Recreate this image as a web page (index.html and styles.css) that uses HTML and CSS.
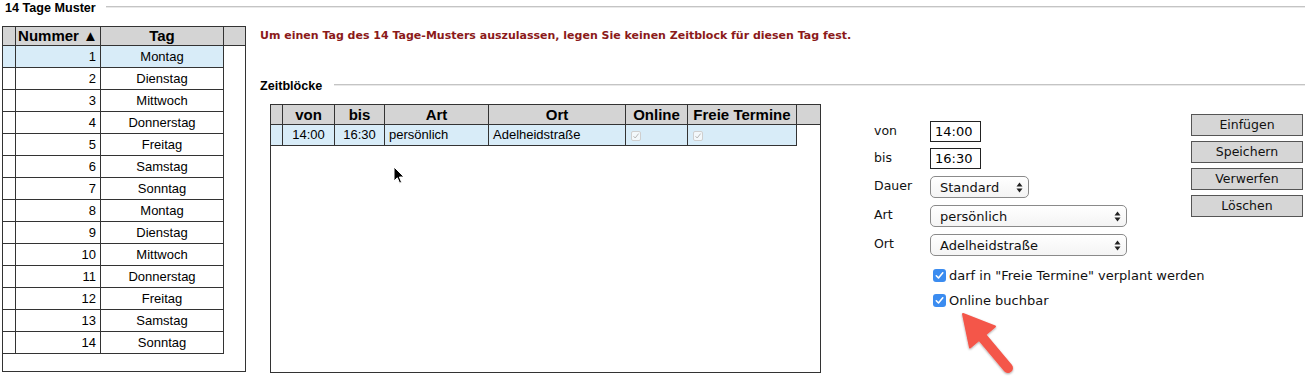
FILE: index.html
```html
<!DOCTYPE html>
<html lang="de">
<head>
<meta charset="utf-8">
<title>14 Tage Muster</title>
<link rel="stylesheet" href="styles.css">
</head>
<body>
<div class="page">
  <div class="legend">
    <span class="legend-text">14 Tage Muster</span>
    <span class="legend-line"></span>
  </div>
  <div class="main">
    <div class="days-box">
      <div class="grid days">
        <div class="h"></div><div class="h">Nummer ▲</div><div class="h">Tag</div><div class="h end"></div>
        <div class="c sel"></div><div class="c num sel">1</div><div class="c mid sel">Montag</div><div class="e"></div>
        <div class="c"></div><div class="c num">2</div><div class="c mid">Dienstag</div><div class="e"></div>
        <div class="c"></div><div class="c num">3</div><div class="c mid">Mittwoch</div><div class="e"></div>
        <div class="c"></div><div class="c num">4</div><div class="c mid">Donnerstag</div><div class="e"></div>
        <div class="c"></div><div class="c num">5</div><div class="c mid">Freitag</div><div class="e"></div>
        <div class="c"></div><div class="c num">6</div><div class="c mid">Samstag</div><div class="e"></div>
        <div class="c"></div><div class="c num">7</div><div class="c mid">Sonntag</div><div class="e"></div>
        <div class="c"></div><div class="c num">8</div><div class="c mid">Montag</div><div class="e"></div>
        <div class="c"></div><div class="c num">9</div><div class="c mid">Dienstag</div><div class="e"></div>
        <div class="c"></div><div class="c num">10</div><div class="c mid">Mittwoch</div><div class="e"></div>
        <div class="c"></div><div class="c num">11</div><div class="c mid">Donnerstag</div><div class="e"></div>
        <div class="c"></div><div class="c num">12</div><div class="c mid">Freitag</div><div class="e"></div>
        <div class="c"></div><div class="c num">13</div><div class="c mid">Samstag</div><div class="e"></div>
        <div class="c"></div><div class="c num">14</div><div class="c mid">Sonntag</div><div class="e"></div>
      </div>
    </div>

    <div class="right">
      <p class="hint">Um einen Tag des 14 Tage-Musters auszulassen, legen Sie keinen Zeitblock für diesen Tag fest.</p>
      <div class="legend sub">
        <span class="legend-text">Zeitblöcke</span>
        <span class="legend-line"></span>
      </div>
      <div class="content">
        <div class="blocks-box">
          <div class="grid blocks">
            <div class="h"></div><div class="h">von</div><div class="h">bis</div><div class="h">Art</div><div class="h">Ort</div><div class="h">Online</div><div class="h">Freie Termine</div><div class="h end"></div>
            <div class="c sel"></div><div class="c mid sel">14:00</div><div class="c mid sel">16:30</div><div class="c left sel">persönlich</div><div class="c left sel">Adelheidstraße</div>
            <div class="c left sel"><span class="mini-check"><svg width="8" height="8" viewBox="0 0 8 8"><path d="M1.5 4.2 L3.2 6 L6.6 1.6" fill="none" stroke="#b8b8b8" stroke-width="1"/></svg></span></div>
            <div class="c left sel"><span class="mini-check"><svg width="8" height="8" viewBox="0 0 8 8"><path d="M1.5 4.2 L3.2 6 L6.6 1.6" fill="none" stroke="#b8b8b8" stroke-width="1"/></svg></span></div>
            <div class="e"></div>
          </div>
        </div>

        <div class="form">
          <div class="frow">
            <span class="flabel">von</span>
            <span class="tinput">14:00</span>
          </div>
          <div class="frow r2">
            <span class="flabel">bis</span>
            <span class="tinput">16:30</span>
          </div>
          <div class="frow r3">
            <span class="flabel">Dauer</span>
            <span class="select short"><span>Standard</span><svg class="updown" width="7" height="11" viewBox="0 0 7 11"><path d="M3.5 0.5 L6.5 4.5 L0.5 4.5 Z M3.5 10.5 L6.5 6.5 L0.5 6.5 Z" fill="#222"/></svg></span>
          </div>
          <div class="frow r3">
            <span class="flabel">Art</span>
            <span class="select long"><span>persönlich</span><svg class="updown" width="7" height="11" viewBox="0 0 7 11"><path d="M3.5 0.5 L6.5 4.5 L0.5 4.5 Z M3.5 10.5 L6.5 6.5 L0.5 6.5 Z" fill="#222"/></svg></span>
          </div>
          <div class="frow r3">
            <span class="flabel">Ort</span>
            <span class="select long"><span>Adelheidstraße</span><svg class="updown" width="7" height="11" viewBox="0 0 7 11"><path d="M3.5 0.5 L6.5 4.5 L0.5 4.5 Z M3.5 10.5 L6.5 6.5 L0.5 6.5 Z" fill="#222"/></svg></span>
          </div>
          <div class="crow first">
            <span class="cbox"><svg width="13" height="13" viewBox="0 0 13 13"><path d="M3.3 6.8 L5.5 9 L9.8 3.8" fill="none" stroke="#fff" stroke-width="1.6" stroke-linecap="round" stroke-linejoin="round"/></svg></span>
            <span class="ctext">darf in "Freie Termine" verplant werden</span>
          </div>
          <div class="crow second">
            <span class="cbox"><svg width="13" height="13" viewBox="0 0 13 13"><path d="M3.3 6.8 L5.5 9 L9.8 3.8" fill="none" stroke="#fff" stroke-width="1.6" stroke-linecap="round" stroke-linejoin="round"/></svg></span>
            <span class="ctext">Online buchbar</span>
          </div>
        </div>

        <div class="buttons">
          <span class="btn">Einfügen</span>
          <span class="btn">Speichern</span>
          <span class="btn">Verwerfen</span>
          <span class="btn">Löschen</span>
        </div>
      </div>
    </div>
  </div>

  <svg class="cursor" width="14" height="20" viewBox="0 0 14 20">
    <path d="M1 1 L1 15 L4.3 11.8 L6.6 17.2 L8.6 16.3 L6.4 11 L11 11 Z" fill="#000" stroke="#fff" stroke-width="1"/>
  </svg>

  <svg class="annot-arrow" width="80" height="80" viewBox="950 305 80 80">
    <defs>
      <filter id="sh" x="-30%" y="-30%" width="160%" height="160%">
        <feDropShadow dx="0" dy="1" stdDeviation="1.3" flood-color="#000" flood-opacity="0.35"/>
      </filter>
    </defs>
    <g filter="url(#sh)" fill="#f4564a" stroke="#f4564a">
      <line x1="982" y1="337" x2="1008" y2="368" stroke-width="10" stroke-linecap="round"/>
      <polygon points="963,314 995,326.5 970,347.5" stroke-width="2" stroke-linejoin="round"/>
    </g>
  </svg>
</div>
</body>
</html>
```

FILE: styles.css
```css
* { box-sizing: border-box; }

html, body {
  margin: 0;
  padding: 0;
  background: #fff;
}

body {
  font-family: "Liberation Sans", Arial, sans-serif;
  color: #000;
}

.page {
  position: relative;
  width: 1305px;
  height: 386px;
  overflow: hidden;
}

/* section titles with rule */
.legend {
  display: flex;
  align-items: center;
  height: 16px;
  padding-left: 5px;
}
.legend-text {
  font-family: "Liberation Sans", Arial, sans-serif;
  font-weight: bold;
  font-size: 12.6px;
  line-height: 16px;
  white-space: nowrap;
}
.legend-line {
  flex: 1;
  height: 2px;
  margin-left: 10px;
  margin-top: -2px;
  border-top: 1px solid #c4c4c4;
  border-bottom: 1px solid #e9e9e9;
}
.legend.sub {
  padding-left: 0;
  margin-top: 35px;
}
.legend.sub .legend-line {
  margin-left: 12px;
}

.main {
  display: flex;
  margin-top: 10px;
  padding-left: 2px;
}

/* generic grid table */
.grid {
  display: grid;
  font-size: 13px;
}
.grid .h {
  background: #d4d4d4;
  border-right: 1px solid #333;
  border-bottom: 1px solid #333;
  font-weight: bold;
  font-size: 15px;
  text-align: center;
  white-space: nowrap;
  overflow: hidden;
}
.grid .h.end { border-right: none; }
.grid .c {
  border-right: 1px solid #333;
  border-bottom: 1px solid #333;
  white-space: nowrap;
  overflow: hidden;
}
.grid .e { background: #fff; }
.grid .sel { background: #d8ecf8; }
.grid .num { text-align: right; padding-right: 4px; }
.grid .mid { text-align: center; }
.grid .left { text-align: left; padding-left: 3px; }

/* left: days */
.days-box {
  width: 244px;
  height: 346px;
  border: 1px solid #333;
  flex: none;
}
.days {
  grid-template-columns: 13px 85px 123px 1fr;
  grid-template-rows: 19px;
  grid-auto-rows: 22px;
}
.days .h { line-height: 18px; }
.days .c { line-height: 21px; }

/* right area */
.right {
  margin-left: 14px;
  flex: 1;
}
.hint {
  margin: 3px 0 0 0;
  font-family: "DejaVu Sans", Verdana, sans-serif;
  font-weight: bold;
  font-size: 11px;
  line-height: 14px;
  color: #8b1a1a;
  white-space: nowrap;
}

.content {
  display: flex;
  align-items: flex-start;
  margin-top: 10px;
}

.blocks-box {
  margin-left: 10px;
  width: 551px;
  height: 269px;
  border: 1px solid #333;
  flex: none;
}
.blocks {
  grid-template-columns: 12px 52px 50px 104px 137px 62px 109px 1fr;
  grid-template-rows: 20px 21px;
}
.blocks .h { line-height: 19px; }
.blocks .c { line-height: 20px; }
.blocks .c.left { padding-left: 4px; }

.mini-check {
  display: inline-flex;
  align-items: center;
  justify-content: center;
  width: 10px;
  height: 10px;
  margin-left: 1px;
  border: 1px solid #cfcfcf;
  border-radius: 2px;
  background: #f3f8fb;
  vertical-align: -1px;
}

/* form */
.form {
  width: 317px;
  margin-left: 53px;
  margin-top: 17px;
  flex: none;
  font-family: "DejaVu Sans", Verdana, sans-serif;
  font-size: 12.5px;
}
.frow {
  display: flex;
  align-items: flex-start;
}
.frow.r2 { margin-top: 6px; }
.frow.r3 { margin-top: 7px; }
.flabel {
  width: 56px;
  margin-top: 2px;
  line-height: 16px;
  color: #111;
}
.tinput {
  display: block;
  width: 51px;
  height: 21px;
  border: 1px solid #222;
  padding-left: 4px;
  font-size: 13px;
  line-height: 19px;
  background: #fff;
}
.select {
  display: flex;
  align-items: center;
  justify-content: space-between;
  height: 22px;
  border: 1px solid #8a8a8a;
  border-radius: 5px;
  padding: 0 5px 0 9px;
  background: linear-gradient(#ffffff, #f4f4f4);
  font-size: 13px;
  color: #111;
}
.select.short { width: 99px; }
.select.long { width: 197px; }
.updown { flex: none; }

.crow {
  display: flex;
  align-items: center;
  height: 13px;
  padding-left: 59px;
  white-space: nowrap;
}
.crow.first { margin-top: 13px; }
.crow.second { margin-top: 12px; }
.cbox {
  width: 13px;
  height: 13px;
  border-radius: 3px;
  background: #3b8cf0;
  display: inline-flex;
  flex: none;
}
.ctext {
  margin-left: 3px;
  font-size: 13px;
  line-height: 16px;
  color: #111;
}

/* buttons */
.buttons {
  display: flex;
  flex-direction: column;
  gap: 5px;
  margin-top: 10px;
  width: 112px;
  flex: none;
}
.btn {
  display: block;
  height: 22px;
  background: #d6d6d6;
  border: 1px solid #555;
  text-align: center;
  font-family: "DejaVu Sans", Verdana, sans-serif;
  font-size: 12.5px;
  line-height: 20px;
  color: #111;
}

/* overlays */
.cursor {
  position: absolute;
  left: 393px;
  top: 166px;
}
.annot-arrow {
  position: absolute;
  left: 950px;
  top: 305px;
}
```
